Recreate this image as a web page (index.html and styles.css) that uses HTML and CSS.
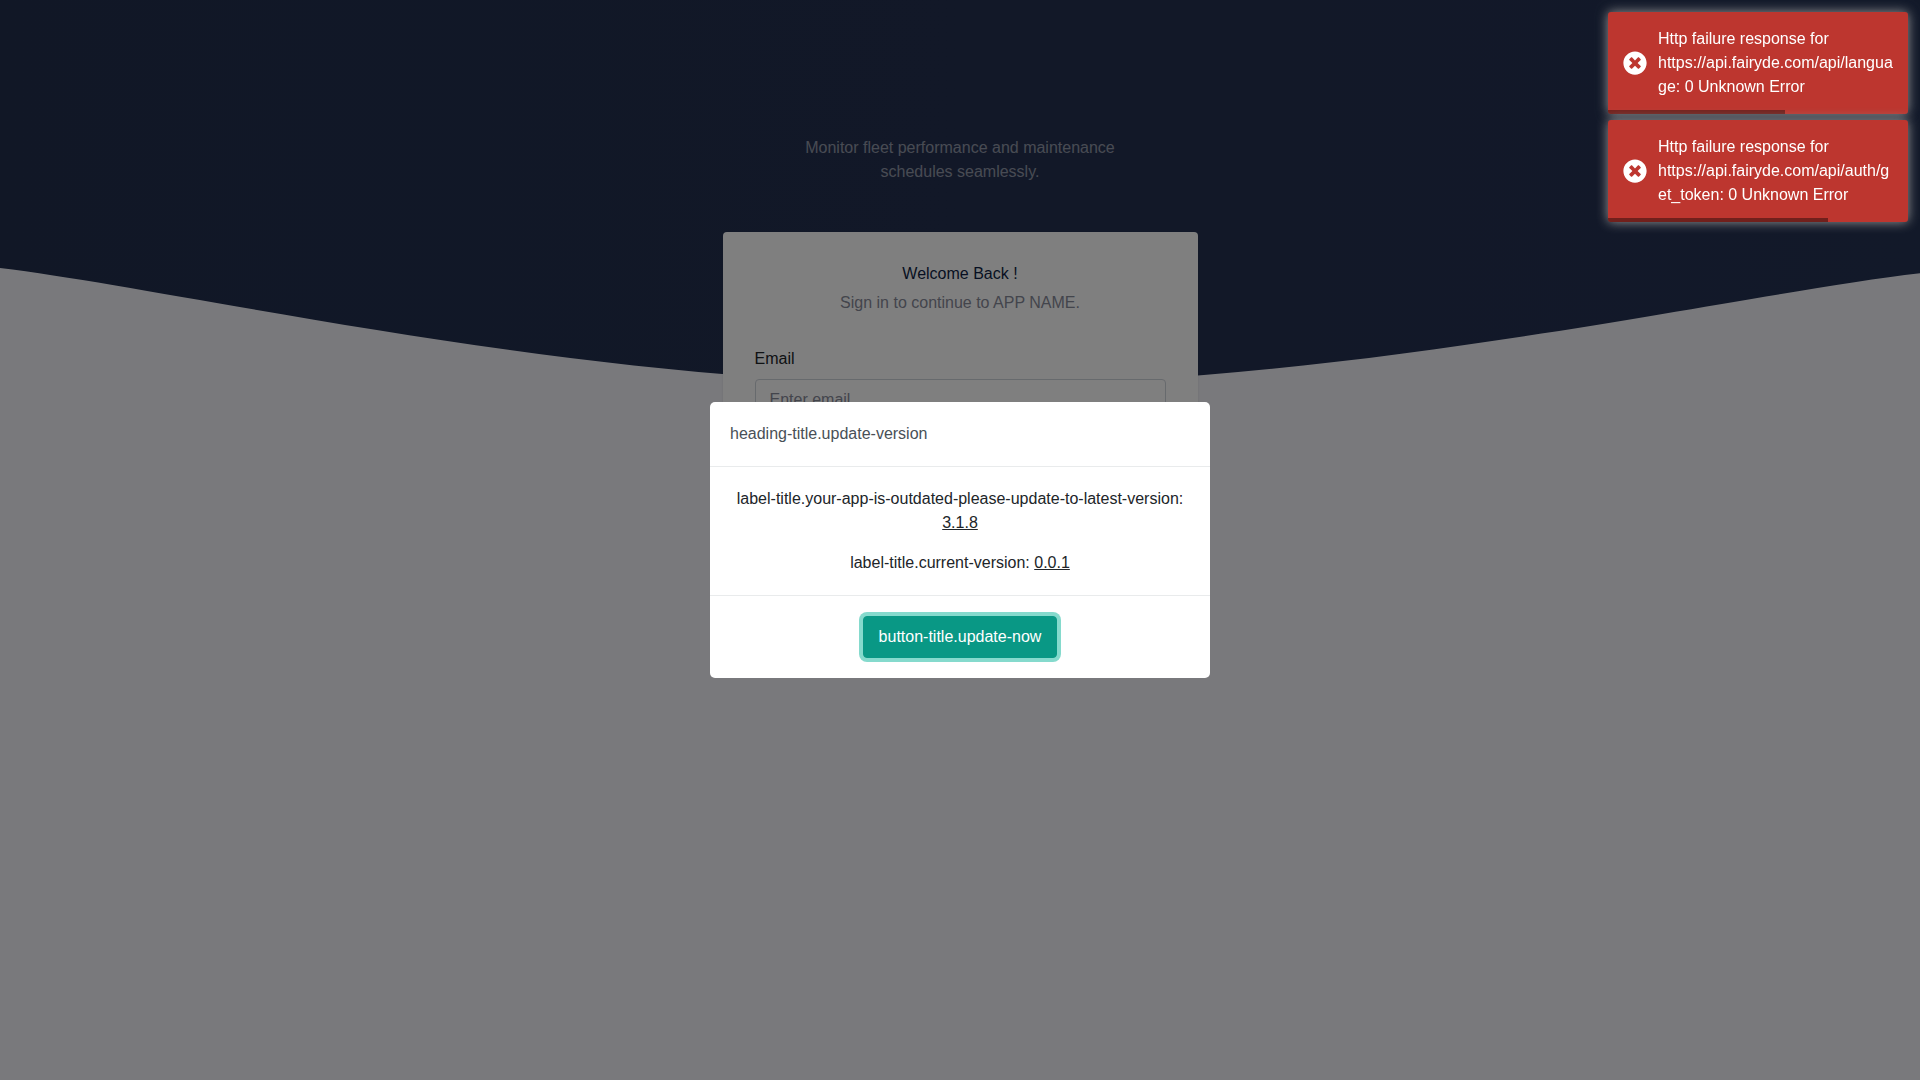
FILE: index.html
```html
<!DOCTYPE html>
<html lang="en">
<head>
  <meta charset="utf-8">
  <meta name="viewport" content="width=device-width, initial-scale=1">
  <title>Sign in</title>
  <link rel="stylesheet" href="styles.css">
</head>
<body>
  <main class="auth-page">
    <div class="auth-bg" aria-hidden="true">
      <svg class="auth-shape" viewBox="0 0 1440 120">
        <path d="M0,36C144,53.6,432,123.2,720,124C1008,124.8,1296,56.8,1440,40L1440,140L0,140Z"/>
      </svg>
    </div>
    <div class="auth-content">
      <p class="tagline">Monitor fleet performance and maintenance schedules seamlessly.</p>
      <section class="card">
        <h1 class="card-title">Welcome Back !</h1>
        <p class="card-subtitle">Sign in to continue to APP NAME.</p>
        <form class="login-form">
          <label class="form-label" for="email">Email</label>
          <input class="form-control" id="email" type="email" placeholder="Enter email">
        </form>
      </section>
    </div>
  </main>

  <div class="modal-backdrop">
    <div class="modal" role="dialog" aria-modal="true" aria-labelledby="modal-title">
      <header class="modal-header">
        <h2 class="modal-title" id="modal-title">heading-title.update-version</h2>
      </header>
      <div class="modal-body">
        <p>label-title.your-app-is-outdated-please-update-to-latest-version: <u>3.1.8</u></p>
        <p>label-title.current-version: <u>0.0.1</u></p>
      </div>
      <footer class="modal-footer">
        <button class="btn" type="button">button-title.update-now</button>
      </footer>
    </div>
  </div>

  <div class="toasts">
    <div class="toast" role="alert">
      <svg class="toast-icon" viewBox="0 0 512 512" aria-hidden="true">
        <path d="M256 8C119 8 8 119 8 256s111 248 248 248 248-111 248-248S393 8 256 8zm121.6 313.1c4.700 4.700 4.700 12.300 0 17L338 377.600c-4.700 4.700-12.300 4.700-17 0L256 312l-65.100 65.600c-4.700 4.700-12.300 4.700-17 0L134.400 338c-4.700-4.700-4.700-12.300 0-17l65.600-65-65.600-65.100c-4.700-4.700-4.700-12.300 0-17l39.600-39.600c4.700-4.700 12.300-4.700 17 0l65 65.700 65.100-65.600c4.700-4.700 12.300-4.700 17 0l39.600 39.600c4.700 4.700 4.700 12.300 0 17L312 256l65.600 65.100z"/>
      </svg>
      <p class="toast-message">Http failure response for https://api.fairyde.com/api/language: 0 Unknown Error</p>
      <div class="toast-progress" style="width: 59%"></div>
    </div>
    <div class="toast" role="alert">
      <svg class="toast-icon" viewBox="0 0 512 512" aria-hidden="true">
        <path d="M256 8C119 8 8 119 8 256s111 248 248 248 248-111 248-248S393 8 256 8zm121.6 313.1c4.700 4.700 4.700 12.300 0 17L338 377.600c-4.700 4.700-12.300 4.700-17 0L256 312l-65.100 65.600c-4.700 4.700-12.300 4.700-17 0L134.400 338c-4.700-4.700-4.700-12.300 0-17l65.600-65-65.600-65.100c-4.700-4.700-4.700-12.300 0-17l39.600-39.600c4.700-4.700 12.300-4.700 17 0l65 65.700 65.100-65.600c4.700-4.700 12.300-4.700 17 0l39.600 39.600c4.700 4.700 4.700 12.300 0 17L312 256l65.600 65.100z"/>
      </svg>
      <p class="toast-message">Http failure response for https://api.fairyde.com/api/auth/get_token: 0 Unknown Error</p>
      <div class="toast-progress" style="width: 73.4%"></div>
    </div>
  </div>
</body>
</html>
```
FILE: styles.css
```css
*,
*::before,
*::after {
  box-sizing: border-box;
}

body {
  margin: 0;
  background: #f3f3f9;
  color: #212529;
  font: 16px/24px "Liberation Sans", Arial, sans-serif;
}

h1,
h2,
p {
  margin: 0;
  font-size: 16px;
  font-weight: 400;
}

/* Sign-in page */
.auth-page {
  position: relative;
  min-height: 100vh;
}

.auth-bg {
  position: absolute;
  inset: 0 0 auto;
  height: 380px;
  overflow: hidden;
  background: linear-gradient(to right, #222f4d, #243050 50%, #243253);
}

.auth-shape {
  position: absolute;
  bottom: 0;
  left: 0;
  display: block;
  width: 100%;
  fill: #f3f3f9;
}

.auth-content {
  position: relative;
  display: flex;
  flex-direction: column;
  align-items: center;
  gap: 48px;
  padding: 136px 12px 48px;
}

.tagline {
  max-width: 340px;
  color: rgba(255, 255, 255, 0.5);
  text-align: center;
}

.card {
  width: 100%;
  max-width: 475px;
  padding: 32px;
  border-radius: 4px;
  background: #fff;
  box-shadow: 0 1px 2px rgba(56, 65, 74, 0.15);
}

.card-title {
  margin-bottom: 8px;
  color: #0f1f45;
  line-height: 19px;
  text-align: center;
}

.card-subtitle {
  color: #878a99;
  text-align: center;
}

.login-form {
  display: flex;
  flex-direction: column;
  gap: 8px;
  margin-top: 32px;
}

.form-control {
  width: 100%;
  padding: 8px 14px;
  border: 1px solid #ced4da;
  border-radius: 4px;
  background: #fff;
  color: #212529;
  font: inherit;
}

.form-control::placeholder {
  color: #878a99;
}

/* Update dialog */
.modal-backdrop {
  position: fixed;
  inset: 0;
  display: flex;
  align-items: center;
  justify-content: center;
  padding: 12px;
  background: rgba(0, 0, 0, 0.5);
}

.modal {
  width: 100%;
  max-width: 500px;
  border-radius: 5px;
  background: #fff;
}

.modal-header {
  padding: 20px;
  border-bottom: 1px solid #e9ebec;
}

.modal-title {
  color: #495057;
}

.modal-body {
  display: flex;
  flex-direction: column;
  gap: 16px;
  padding: 20px;
  text-align: center;
}

.modal-footer {
  display: flex;
  justify-content: center;
  padding: 20px;
  border-top: 1px solid #e9ebec;
}

.btn {
  padding: 8px 15px;
  border: 1px solid #099885;
  border-radius: 4px;
  background: #099885;
  box-shadow: 0 0 0 4px #85dacd;
  color: #fff;
  font: inherit;
  cursor: pointer;
}

.btn:focus {
  outline: none;
}

/* Notifications */
.toasts {
  position: fixed;
  top: 12px;
  right: 12px;
  display: flex;
  flex-direction: column;
  gap: 6px;
  width: 300px;
}

.toast {
  position: relative;
  display: flex;
  align-items: center;
  gap: 11px;
  padding: 15px;
  border-radius: 3px;
  overflow: hidden;
  background: #bd362f;
  box-shadow: 0 0 12px #999;
  color: #fff;
}

.toast-icon {
  flex: none;
  width: 24px;
  height: 24px;
  fill: #fff;
}

.toast-message {
  min-width: 0;
  overflow-wrap: anywhere;
}

.toast-progress {
  position: absolute;
  bottom: 0;
  left: 0;
  height: 4px;
  background: #000;
  opacity: 0.4;
}
```
